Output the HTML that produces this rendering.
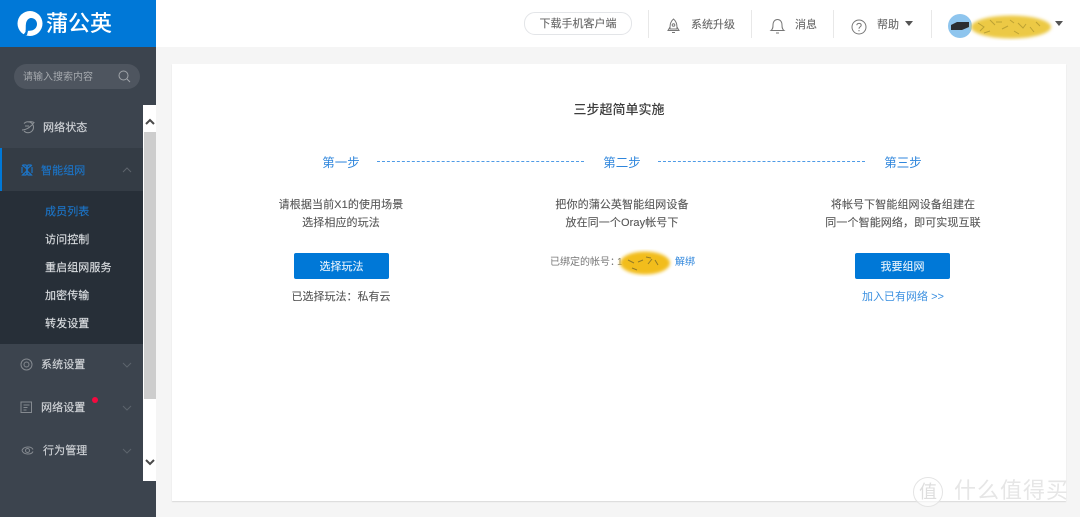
<!DOCTYPE html>
<html lang="zh"><head><meta charset="utf-8"><title>蒲公英</title>
<style>
html,body{margin:0;padding:0;width:1080px;height:517px;overflow:hidden;background:#f5f5f5;font-family:"Liberation Sans","Noto Sans CJK SC",sans-serif;font-size:11px;color:#555}
div,span,svg{position:absolute;white-space:nowrap}
svg{overflow:visible}
.c{text-align:center}
.m{color:#d2d5d9;font-size:11px;line-height:16px;letter-spacing:.1px;-webkit-text-stroke:.15px}
.s{color:#dcdfe2;font-size:11px;line-height:16px;left:45px;letter-spacing:.1px;-webkit-text-stroke:.15px}
.t{color:#666;font-size:11px;line-height:16px;-webkit-text-stroke:.1px}
.st{color:#2f86dc;font-size:12.500px;line-height:18px;width:60px;text-align:center;top:154px}
.d{top:161px;height:0;border-top:1px dashed #4f9be6}
.p{color:#555;font-size:11px;line-height:24px;text-align:center;width:260px;letter-spacing:.1px;-webkit-text-stroke:.1px}
.b{background:#0078d7;border-radius:2px;color:#e8f3fc;width:95px;height:26px;line-height:28px;text-align:center;top:253px;font-size:11px;-webkit-text-stroke:.1px}
.v{width:1px;height:28px;top:10px;background:#e8e8e8}
</style></head><body>
<div style="left:0;top:0;width:1080px;height:47px;background:#fff"></div>
<div style="left:0;top:0;width:156px;height:47px;background:#0078d7"></div>
<svg style="left:17px;top:11px" width="26" height="25" viewBox="0 0 26 25"><circle cx="13" cy="12.500" r="12.500" fill="#fff"/><path d="M14 7C17.500 7 20 9.500 20 13C20 16.500 17.500 19 14.500 19.500C12 20 10 19.500 8.500 20.500C9 17.500 8.500 15 9 12.500C9.500 9.500 11.500 7 14 7Z" fill="#0078d7"/><path d="M5 25C7 23 9 21 9 19L11 20L10 24Z" fill="#0078d7"/></svg>
<div style="left:46px;top:9px;color:#fff;font-size:22px;line-height:30px;font-weight:500">蒲公英</div>

<div style="left:0;top:47px;width:156px;height:470px;background:#3c444e"></div>
<div style="left:14px;top:64px;width:126px;height:25px;border-radius:13px;background:#4e555f"></div>
<div style="left:23px;top:70px;color:#a5a9ae;font-size:10px;line-height:16px">请输入搜索内容</div>
<svg style="left:118px;top:70px" width="13" height="13" fill="none" stroke="#a0a4a9" stroke-width="1"><circle cx="5.500" cy="5.500" r="4.500"/><path d="M9 9l3 3"/></svg>

<svg style="left:21px;top:120px" width="14" height="14" fill="none" stroke="#8d9297" stroke-width="1"><path d="M3 3.500A5.500 5.500 0 1 1 3 11M1 10C5 10 10 7 13 2.500C11 1.500 9 1.500 7 2M4 6h4"/></svg>
<div class="m" style="left:43px;top:120px">网络状态</div>
<div style="left:0;top:148px;width:143px;height:43px;background:#343c45"></div>
<div style="left:0;top:148px;width:2px;height:43px;background:#0078d7"></div>
<svg style="left:21px;top:164px" width="12" height="12" fill="none" stroke="#1c74c6" stroke-width="1.200"><path d="M2 1H5C7 3 5 3 6 6C7 9 9 9 10.500 11H7C5 9 7 9 6 6C5 3 3 3 1.500 1.500ZM10 1H7C5 3 7 3 6 6C5 9 3 9 1.500 11H5C7 9 5 9 6 6C7 3 9 3 10.500 1.500ZM1 3V9M11 3V9"/></svg>
<div class="m" style="left:41px;top:163px;color:#1c74c6">智能组网</div>
<svg style="left:122px;top:167px" width="10" height="6" fill="none" stroke="#5d646c" stroke-width="1"><path d="M1 5L5 1L9 5"/></svg>
<div style="left:0;top:191px;width:143px;height:153px;background:#272f38"></div>
<div class="s" style="top:204px;color:#1c74c6">成员列表</div>
<div class="s" style="top:232px">访问控制</div>
<div class="s" style="top:260px">重启组网服务</div>
<div class="s" style="top:288px">加密传输</div>
<div class="s" style="top:316px">转发设置</div>

<svg style="left:20px;top:358px" width="13" height="13" fill="none" stroke="#858a90" stroke-width="1"><circle cx="6.500" cy="6.500" r="5.500"/><circle cx="6.500" cy="6.500" r="2.500"/></svg>
<div class="m" style="left:41px;top:357px">系统设置</div>
<svg style="left:122px;top:362px" width="10" height="6" fill="none" stroke="#5d646c" stroke-width="1"><path d="M1 1L5 5L9 1"/></svg>
<svg style="left:20px;top:401px" width="13" height="13" fill="none" stroke="#858a90" stroke-width="1"><rect x="1" y="1" width="10.500" height="10.500"/><path d="M3.500 4h6M3.500 6.500h4M3.500 9h3"/></svg>
<div class="m" style="left:41px;top:400px">网络设置</div>
<div style="left:92px;top:397px;width:6px;height:6px;border-radius:3px;background:#f5093f"></div>
<svg style="left:122px;top:405px" width="10" height="6" fill="none" stroke="#5d646c" stroke-width="1"><path d="M1 1L5 5L9 1"/></svg>
<svg style="left:21px;top:444px" width="13" height="13" fill="none" stroke="#858a90" stroke-width="1"><path d="M1 6.500C2.500 2 10.500 2 12 5.500M12 7.500C10.500 11 2.500 11 1 6.500"/><circle cx="6.500" cy="6.500" r="2"/></svg>
<div class="m" style="left:43px;top:443px">行为管理</div>
<svg style="left:122px;top:448px" width="10" height="6" fill="none" stroke="#5d646c" stroke-width="1"><path d="M1 1L5 5L9 1"/></svg>

<div style="left:143px;top:105px;width:13px;height:376px;background:#fff"></div>
<div style="left:144px;top:132px;width:12px;height:267px;background:#cdcdcd"></div>
<svg style="left:145px;top:118px" width="10" height="7" fill="none" stroke="#4a4a4a" stroke-width="2"><path d="M1 6L5 2L9 6"/></svg>
<svg style="left:145px;top:459px" width="10" height="7" fill="none" stroke="#4a4a4a" stroke-width="2"><path d="M1 1L5 5L9 1"/></svg>

<div style="left:524px;top:12px;width:106px;height:21px;border:1px solid #e3e5e8;border-radius:11px;text-align:center;line-height:23px;color:#666;font-size:11px;-webkit-text-stroke:.1px">下载手机客户端</div>
<div class="v" style="left:648px"></div>
<svg style="left:667px;top:18px" width="13" height="16" fill="none" stroke="#777" stroke-width="1"><path d="M6.500 1C3.500 3.500 3 6 3 11H10C10 6 9.500 3.500 6.500 1Z"/><circle cx="6.500" cy="7" r="1.300"/><path d="M3 9L1 12.500H12L10 9M5 14.500H8"/></svg>
<div class="t" style="left:691px;top:17px">系统升级</div>
<div class="v" style="left:751px"></div>
<svg style="left:770px;top:18px" width="15" height="16" fill="none" stroke="#777" stroke-width="1"><path d="M1 12.500H14C12 11 12 9 12 7C12 3.500 10 1.500 7.500 1.500C5 1.500 3 3.500 3 7C3 9 3 11 1 12.500ZM6 15H9"/></svg>
<div class="t" style="left:795px;top:17px">消息</div>
<div class="v" style="left:833px"></div>
<svg style="left:851px;top:19px" width="16" height="16" fill="none" stroke="#777" stroke-width="1"><circle cx="8" cy="8" r="7"/><path d="M5.800 6.200C6 3.800 10.200 3.800 10.200 6.200C10.200 7.800 8 7.800 8 9.700M8 11v1.300"/></svg>
<div class="t" style="left:877px;top:17px">帮助</div>
<div style="left:905px;top:21px;width:0;height:0;border:4.500px solid transparent;border-top:5px solid #555;border-bottom:0"></div>
<div class="v" style="left:931px"></div>
<div style="left:948px;top:14px;width:24px;height:24px;border-radius:12px;background:#8ec5ee"></div>
<svg style="left:950px;top:21px" width="20" height="10"><path d="M1 4L7 1H19V6L12 9H1Z" fill="#2b2d30"/></svg>
<svg style="left:970px;top:13px" width="84" height="28"><defs><filter id="f"><feGaussianBlur stdDeviation="1.500"/></filter></defs><ellipse cx="41" cy="14" rx="40" ry="11.500" fill="#ecc945" filter="url(#f)"/><path d="M8 10l6 4-4 4M20 7l5 5M32 16l6-3M48 10l5 5 3-4M60 14l4 5M14 20l6-2M26 9h6M40 7l4 3M66 9l4 4M44 18l5 3" fill="none" stroke="#a8912e" stroke-width="1" opacity=".7"/></svg>
<div style="left:1055px;top:21px;width:0;height:0;border:4.500px solid transparent;border-top:5px solid #555;border-bottom:0"></div>

<div style="left:172px;top:64px;width:894px;height:437px;background:#fff;box-shadow:0 1px 1px #d8d8d8"></div>
<div class="c" style="left:519px;top:101px;width:200px;color:#3d3d3d;font-size:13px;line-height:18px;font-weight:500">三步超简单实施</div>
<div class="st" style="left:311px">第一步</div>
<div class="d" style="left:377px;width:207px"></div>
<div class="st" style="left:592px">第二步</div>
<div class="d" style="left:658px;width:207px"></div>
<div class="st" style="left:873px">第三步</div>

<div class="p" style="left:211px;top:193px">请根据当前X1的使用场景</div>
<div class="p" style="left:211px;top:211px">选择相应的玩法</div>
<div class="b" style="left:294px">选择玩法</div>
<div class="c" style="left:241px;top:289px;width:200px;line-height:16px;color:#555;-webkit-text-stroke:.1px">已选择玩法：私有云</div>

<div class="p" style="left:492px;top:193px">把你的蒲公英智能组网设备</div>
<div class="p" style="left:492px;top:211px">放在同一个Oray帐号下</div>
<div style="left:550px;top:255px;font-size:10px;line-height:16px;color:#777">已绑定的帐号：</div>
<div style="left:617px;top:255px;font-size:10px;line-height:16px;color:#777">1</div>
<svg style="left:618px;top:249px" width="54" height="28"><ellipse cx="27" cy="14" rx="25" ry="11.500" fill="#f2bd1c" filter="url(#f)"/><path d="M10 11l6 3M20 13l5-2M30 15l4-5M37 11l3 5M14 19l5 2M28 8l5 1" fill="none" stroke="#7a6a2a" stroke-width="1" opacity=".8"/></svg>
<div style="left:675px;top:255px;font-size:10px;line-height:16px;color:#2f86dc">解绑</div>

<div class="p" style="left:773px;top:193px">将帐号下智能组网设备组建在</div>
<div class="p" style="left:773px;top:211px">同一个智能网络，即可实现互联</div>
<div class="b" style="left:855px">我要组网</div>
<div class="c" style="left:803px;top:289px;width:200px;line-height:16px;color:#3a8fe0">加入已有网络 &gt;&gt;</div>

<svg style="left:913px;top:477px" width="32" height="32" fill="none" stroke="#e4e4e4" stroke-width="1"><circle cx="15" cy="15" r="14.500" fill="#fff" fill-opacity=".6"/></svg>
<div style="left:919px;top:481px;font-size:18px;line-height:22px;color:#dedede">值</div>
<div style="left:954px;top:476px;font-size:22px;line-height:30px;color:#e6e6e6;letter-spacing:1px">什么值得买</div>
</body></html>
